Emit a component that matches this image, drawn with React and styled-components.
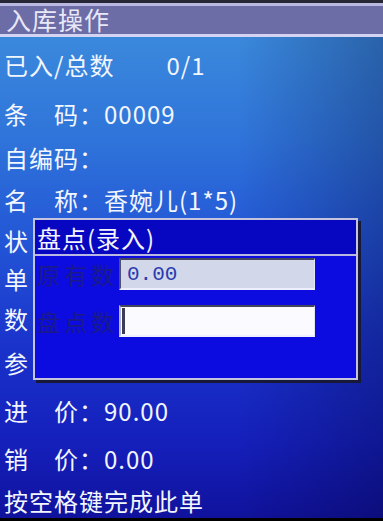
import React from 'react';
import styled, { createGlobalStyle } from 'styled-components';

const GlobalStyle = createGlobalStyle`
  html, body {
    margin: 0;
    padding: 0;
    background: #000;
  }
  body {
    font-family: "Noto Sans CJK SC", "Noto Sans", sans-serif;
  }
`;

const Screen = styled.div`
  position: relative;
  width: 383px;
  height: 518px;
  overflow: hidden;
  display: flex;
  flex-direction: column;
  background:
    linear-gradient(90deg, rgba(0, 0, 30, 0) 62%, rgba(0, 0, 40, 0.28) 100%),
    linear-gradient(180deg, #3a88dc 40px, #2f74da 140px, #2356d6 240px, #1a34cc 340px, #1520bc 440px, #10129c 518px);
  color: #f2f6ff;
`;

const TitleBar = styled.div`
  height: 37px;
  border-top: 3px solid #262636;
  background: linear-gradient(180deg, #b8b8e0 0 3px, #6c6ca6 3px calc(100% - 3px), #d4d4f2 calc(100% - 3px));
  display: flex;
  align-items: center;
  padding: 0 0 2px 6px;
  box-sizing: border-box;
  font-size: 25px;
  letter-spacing: 1px;
  color: #e8e8f8;
  white-space: pre;
`;

const Row = styled.div`
  height: ${p => p.$h}px;
  flex: ${p => (p.$h ? 'none' : '1')};
  box-sizing: border-box;
  display: flex;
  align-items: center;
  padding: 2px 0 0 4px;
  font-size: 24px;
  letter-spacing: 1px;
  white-space: pre;
`;

const Gap = styled.span`
  display: inline-block;
  width: ${p => p.$w}px;
`;

const Dialog = styled.div`
  position: absolute;
  left: 33px;
  top: 218px;
  width: 325px;
  height: 162px;
  box-sizing: border-box;
  border: 2px solid #c4c4de;
  box-shadow: 3px 3px 0 #181838;
  background: #0c0ce0;
  display: flex;
  flex-direction: column;
`;

const DialogTitle = styled.div`
  height: 36px;
  box-sizing: border-box;
  border-bottom: 2px solid #b8b8e2;
  background: #0707c2;
  display: flex;
  align-items: center;
  padding-left: 2px;
  font-size: 24px;
  letter-spacing: 1px;
  color: #f4f4ff;
`;

const DialogBody = styled.div`
  display: flex;
  flex-direction: column;
  gap: 15px;
  padding-top: 2px;
`;

const Field = styled.div`
  display: flex;
  align-items: center;
  height: 32px;
`;

const FieldLabel = styled.span`
  width: 84px;
  padding-left: 2px;
  box-sizing: border-box;
  font-size: 23px;
  letter-spacing: 4px;
  color: #1a1a8c;
`;

const InputBox = styled.div`
  width: 196px;
  height: 32px;
  box-sizing: border-box;
  display: flex;
  align-items: center;
  background: ${p => (p.$active ? '#fafaff' : '#d3d7ea')};
  border-top: 2px solid #44445c;
  border-left: 2px solid ${p => (p.$active ? '#b8b8cc' : '#50506a')};
  border-right: 1px solid #e4e4f4;
  border-bottom: 2px solid #eeeeff;
  padding-left: 6px;
  font-family: "Liberation Mono", "DejaVu Sans Mono", monospace;
  font-size: 21px;
  color: #2a3cb0;
`;

const Caret = styled.span`
  width: 3px;
  height: 26px;
  margin-left: -5px;
  background: #3c3c58;
`;

export default function App() {
  return (
    <>
      <GlobalStyle />
      <Screen>
        <TitleBar>入库操作</TitleBar>
        <Row $h={53}>已入/总数<Gap $w={52} />0/1</Row>
        <Row $h={45}>条　码：00009</Row>
        <Row $h={42}>自编码：</Row>
        <Row $h={43}>名　称：香婉儿(1*5)</Row>
        <Row $h={38}>状</Row>
        <Row $h={39}>单</Row>
        <Row $h={41}>数</Row>
        <Row $h={46}>参</Row>
        <Row $h={51}>进　价：90.00</Row>
        <Row $h={45}>销　价：0.00</Row>
        <Row>按空格键完成此单</Row>

        <Dialog>
          <DialogTitle>盘点(录入)</DialogTitle>
          <DialogBody>
            <Field>
              <FieldLabel>原有数</FieldLabel>
              <InputBox>0.00</InputBox>
            </Field>
            <Field>
              <FieldLabel>盘点数</FieldLabel>
              <InputBox $active>
                <Caret />
              </InputBox>
            </Field>
          </DialogBody>
        </Dialog>
      </Screen>
    </>
  );
}
